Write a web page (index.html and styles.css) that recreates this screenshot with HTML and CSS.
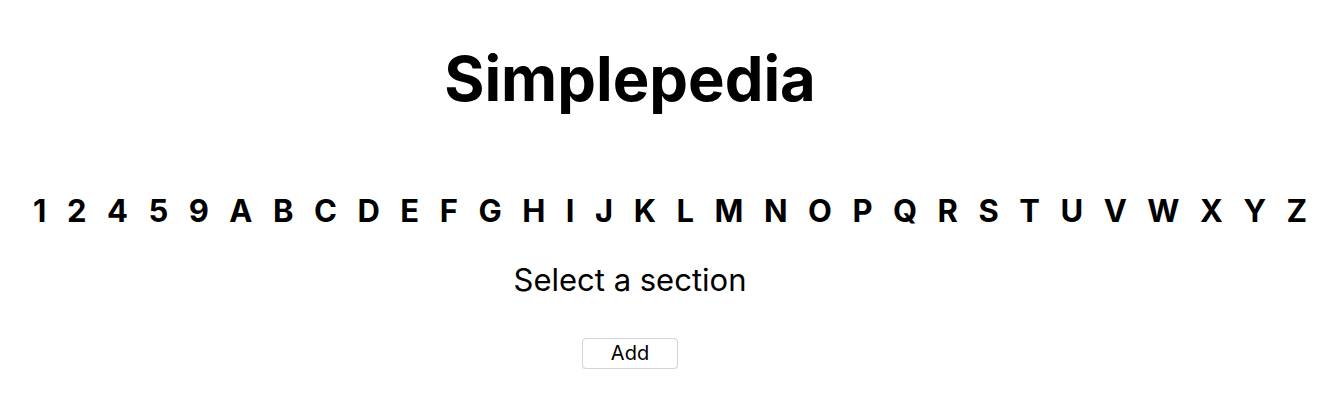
FILE: index.html
```html
<!DOCTYPE html>
<html>
<head>
<meta charset="utf-8">
<link rel="stylesheet" href="styles.css">
</head>
<body>
<div class="app">
  <h1 class="title">Simplepedia</h1>
  <div class="sections">
    <span class="sec">1</span><span class="sec">2</span><span class="sec">4</span><span class="sec">5</span><span class="sec">9</span><span class="sec">A</span><span class="sec">B</span><span class="sec">C</span><span class="sec">D</span><span class="sec">E</span><span class="sec">F</span><span class="sec">G</span><span class="sec">H</span><span class="sec">I</span><span class="sec">J</span><span class="sec">K</span><span class="sec">L</span><span class="sec">M</span><span class="sec">N</span><span class="sec">O</span><span class="sec">P</span><span class="sec">Q</span><span class="sec">R</span><span class="sec">S</span><span class="sec">T</span><span class="sec">U</span><span class="sec">V</span><span class="sec">W</span><span class="sec">X</span><span class="sec">Y</span><span class="sec">Z</span>
  </div>
  <p class="prompt">Select a section</p>
  <div class="actions"><button class="add">Add</button></div>
</div>
</body>
</html>
```
FILE: styles.css
```css
html, body {
  margin: 0;
  padding: 0;
  background: #fff;
}
body {
  font-family: "Inter", "Liberation Sans", sans-serif;
  color: #000;
}
.app {
  width: 1260px;
  text-align: center;
}
.title {
  margin: 0;
  padding-top: 41px;
  font-size: 61.5px;
  font-weight: 700;
  line-height: 75px;
}
.sections {
  display: flex;
  gap: 20.5px;
  padding-left: 33px;
  margin-top: 77px;
  width: 1300px;
  font-size: 31px;
  font-weight: 700;
  line-height: 36px;
}
.prompt {
  margin: 33px 0 0;
  font-size: 31px;
  line-height: 36px;
}
.actions {
  margin-top: 40px;
  line-height: 0;
}
.add {
  box-sizing: border-box;
  width: 96px;
  height: 31px;
  font-family: "Inter", "Liberation Sans", sans-serif;
  font-size: 20px;
  line-height: 29px;
  background: #fff;
  border: 1px solid #d4d4d4;
  border-radius: 4px;
  box-shadow: 0 1px 1px rgba(0,0,0,0.08);
  color: #000;
  padding: 0;
}
```
